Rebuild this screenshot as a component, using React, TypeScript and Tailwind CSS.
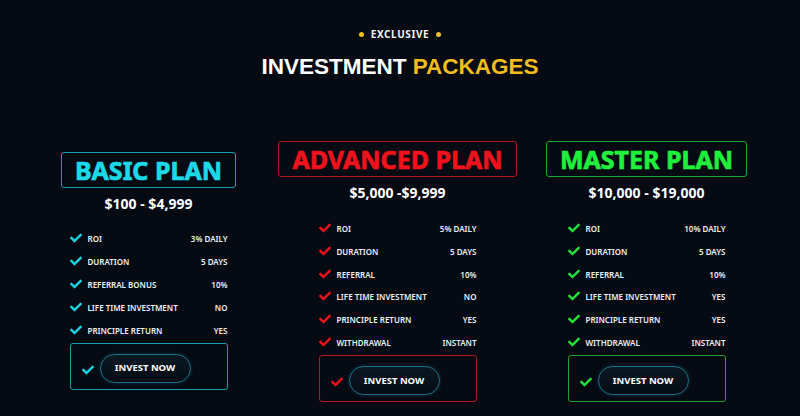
import { FaCheck } from "react-icons/fa";

type Plan = {
  name: string;
  price: string;
  rows: [string, string][];
  text: string;
  border: string;
  check: string;
  offset: string;
  listTop: string;
  rowH: string;
};

const plans: Plan[] = [
  {
    name: "BASIC PLAN",
    price: "$100 - $4,999",
    rows: [
      ["ROI", "3% DAILY"],
      ["DURATION", "5 DAYS"],
      ["REFERRAL BONUS", "10%"],
      ["LIFE TIME INVESTMENT", "NO"],
      ["PRINCIPLE RETURN", "YES"],
    ],
    text: "text-[#1cd9e8]",
    border: "border-[#1a9aac]",
    check: "text-[#1cd2e0]",
    offset: "mt-[11px]",
    listTop: "mt-[14px]",
    rowH: "h-[23px]",
  },
  {
    name: "ADVANCED PLAN",
    price: "$5,000 -$9,999",
    rows: [
      ["ROI", "5% DAILY"],
      ["DURATION", "5 DAYS"],
      ["REFERRAL", "10%"],
      ["LIFE TIME INVESTMENT", "NO"],
      ["PRINCIPLE RETURN", "YES"],
      ["WITHDRAWAL", "INSTANT"],
    ],
    text: "text-[#f0121c]",
    border: "border-[#b3161f]",
    check: "text-[#e8141e]",
    offset: "mt-0",
    listTop: "mt-[16px]",
    rowH: "h-[22.7px]",
  },
  {
    name: "MASTER PLAN",
    price: "$10,000 - $19,000",
    rows: [
      ["ROI", "10% DAILY"],
      ["DURATION", "5 DAYS"],
      ["REFERRAL", "10%"],
      ["LIFE TIME INVESTMENT", "YES"],
      ["PRINCIPLE RETURN", "YES"],
      ["WITHDRAWAL", "INSTANT"],
    ],
    text: "text-[#1ef03c]",
    border: "border-[#1fa52f]",
    check: "text-[#22e23a]",
    offset: "mt-0",
    listTop: "mt-[16px]",
    rowH: "h-[22.7px]",
  },
];

function PlanCard({ plan }: { plan: Plan }) {
  return (
    <div className={`flex flex-col items-center ${plan.offset}`}>
      <div
        className={`h-[36px] px-[13px] flex items-center border rounded-[3px] ${plan.border} ${plan.text} text-[25px] font-bold leading-none [-webkit-text-stroke:0.7px_currentColor]`}
      >
        {plan.name}
      </div>
      <p className="mt-[7px] text-[14px] leading-[18px] font-bold text-white">
        {plan.price}
      </p>

      <ul className={`w-[158px] ${plan.listTop}`}>
        {plan.rows.map(([label, value]) => (
          <li key={label} className={`${plan.rowH} flex items-center text-[8px] font-semibold text-[#eef2f7]`}>
            <FaCheck className={`w-[12px] h-[12px] shrink-0 -mt-[2px] ${plan.check}`} />
            <span className="ml-[6px]">{label}</span>
            <span className="ml-auto">{value}</span>
          </li>
        ))}
      </ul>

      <div className={`mt-[1px] w-[158px] h-[47px] border rounded-[3px] ${plan.border} flex items-center pl-[11px] pt-[4px]`}>
        <FaCheck className={`w-[12px] h-[12px] shrink-0 ${plan.check} mt-[3px]`} />
        <button className="ml-[6px] w-[91px] h-[29px] rounded-full border border-[#1b7486] bg-gradient-to-b from-[#0a1822] to-[#050c15] text-[9.5px] font-bold text-white shadow-[0_0_4px_rgba(30,160,190,0.25)]">
          INVEST NOW
        </button>
      </div>
    </div>
  );
}

export default function App() {
  return (
    <div className="w-[800px] h-[416px] overflow-hidden bg-[#050a13] font-['Noto_Sans',sans-serif]">
      <div className="pt-[28px] flex flex-col items-center">
        <div className="h-[12px] flex items-center gap-[7px]">
          <span className="w-[5px] h-[5px] rounded-full bg-[#f2bf1f]" />
          <span className="text-[10px] font-bold leading-none text-[#f3f5f8] tracking-[0.6px]">EXCLUSIVE</span>
          <span className="w-[5px] h-[5px] rounded-full bg-[#f2bf1f]" />
        </div>
        <h2 className="mt-[14px] text-[22.5px] leading-[26px] font-bold text-white font-['Liberation_Sans',Arial,sans-serif]">
          INVESTMENT <span className="text-[#f2bd1d]">PACKAGES</span>
        </h2>
      </div>

      <div className="mt-[61px] ml-[24px] w-[747px] grid grid-cols-3 items-start">
        {plans.map((p) => (
          <PlanCard key={p.name} plan={p} />
        ))}
      </div>
    </div>
  );
}
